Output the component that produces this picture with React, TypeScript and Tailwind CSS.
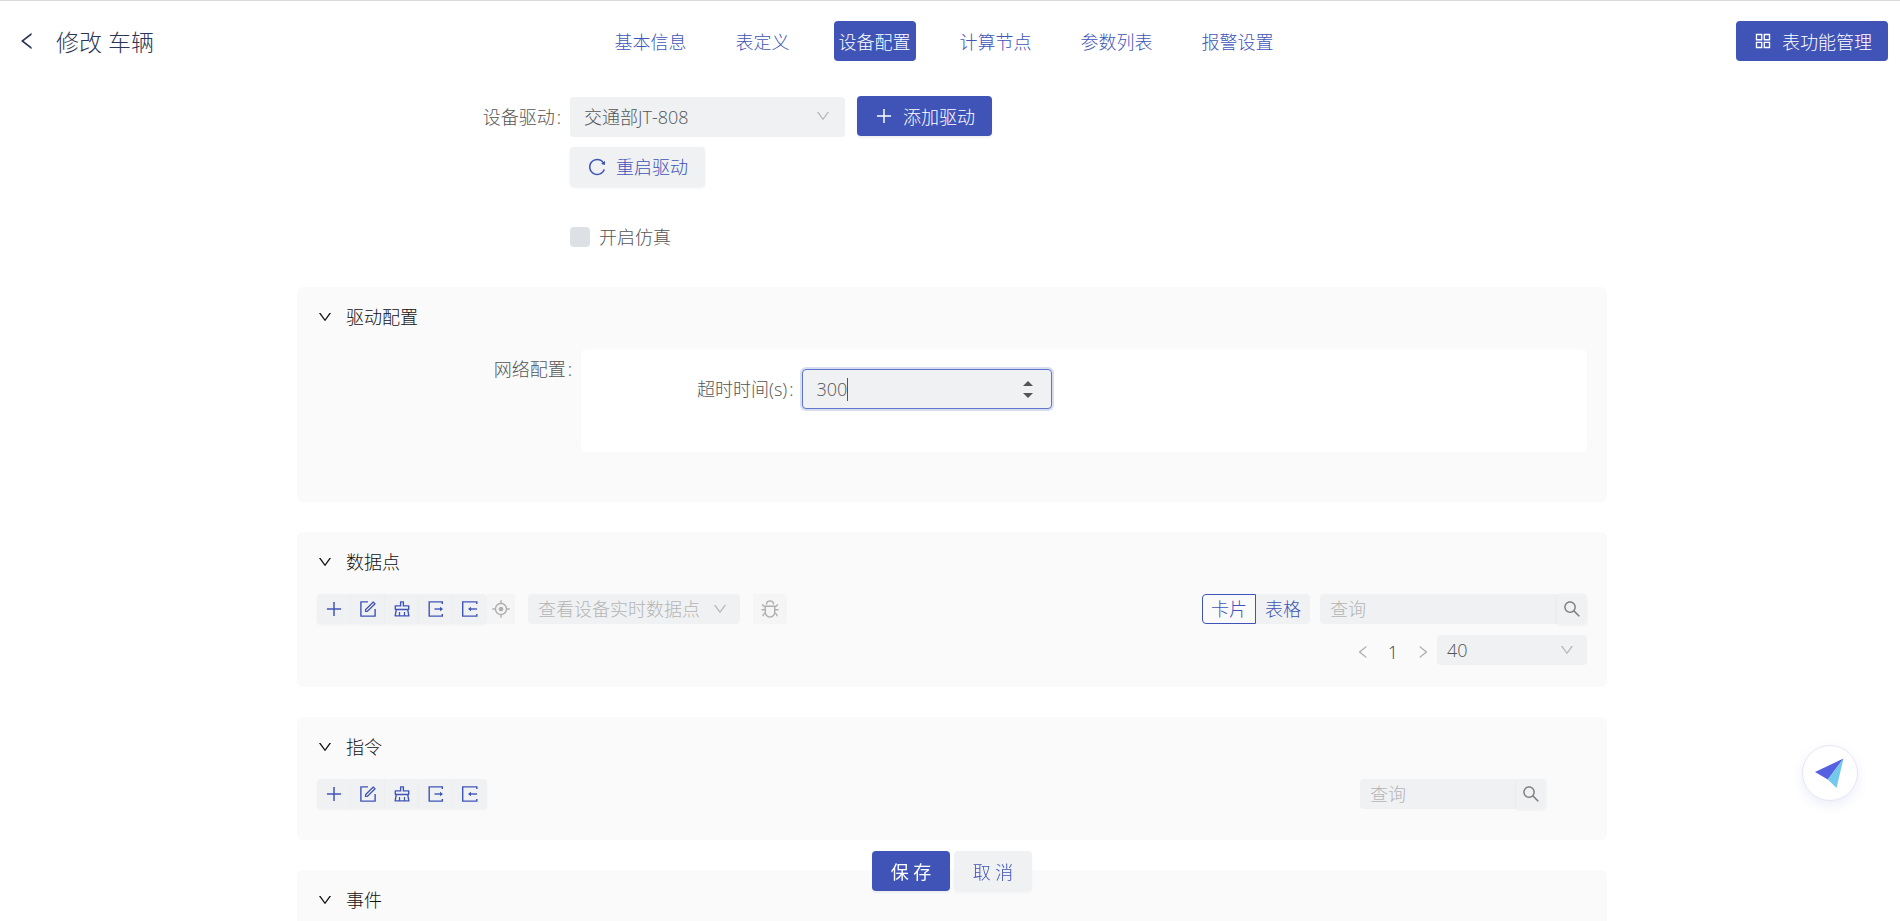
import React, { useState } from "react";
import type { ReactNode } from "react";
import {
  AiOutlineAim,
  AiOutlineAppstore,
  AiOutlineBug,
  AiOutlineClear,
  AiOutlineDown,
  AiOutlineForm,
  AiOutlineLeft,
  AiOutlinePlus,
  AiOutlineReload,
  AiOutlineRight,
  AiOutlineSearch,
} from "react-icons/ai";

const tabs = ["基本信息", "表定义", "设备配置", "计算节点", "参数列表", "报警设置"];

function ExportIcon() {
  return (
    <svg viewBox="0 0 20 20" className="size-5 fill-none stroke-current stroke-[1.4]">
      <path d="M16.300 5V2.900H3.200v14.200h13.100V15" />
      <path d="M8.500 10h6" />
      <path d="M14 7.800 17 10l-3 2.200z" className="fill-current stroke-none" />
    </svg>
  );
}

function ImportIcon() {
  return (
    <svg viewBox="0 0 20 20" className="size-5 fill-none stroke-current stroke-[1.4]">
      <path d="M16.800 5V2.900H2.700v14.200h14.100V15" />
      <path d="M10.500 10h6.500" />
      <path d="M11 7.800 8 10l3 2.200z" className="fill-current stroke-none" />
    </svg>
  );
}

function Header() {
  const [active, setActive] = useState("设备配置");
  return (
    <header className="grid grid-cols-[1fr_auto_1fr] items-center border-t border-[#d9d9d9] py-5 pr-3 pl-4">
      <div className="flex items-center gap-[18px] text-[#2c3554]">
        <button type="button" aria-label="返回">
          <AiOutlineLeft className="size-[22px]" />
        </button>
        <h1 className="pt-px text-[23px] leading-8">修改 车辆</h1>
      </div>
      <nav className="-ml-4 flex gap-[39px]">
        {tabs.map((tab) => (
          <button
            key={tab}
            type="button"
            onClick={() => setActive(tab)}
            className={
              tab === active
                ? "h-10 rounded bg-[#4054b8] px-[5px] pt-0.5 text-white"
                : "h-10 rounded px-[5px] pt-0.5 text-[#4054b8]"
            }
          >
            {tab}
          </button>
        ))}
      </nav>
      <button
        type="button"
        className="flex h-10 items-center gap-[9px] justify-self-end rounded bg-[#4054b8] pr-4 pl-[17px] text-white"
      >
        <AiOutlineAppstore className="size-5" />
        <span className="pt-0.5">表功能管理</span>
      </button>
    </header>
  );
}

function Panel({ title, className, children }: { title: string; className: string; children?: ReactNode }) {
  return (
    <section className={`${className} bg-[#fafafa] px-5 pt-4`}>
      <h2>
        <button type="button" className="flex h-7 items-center gap-[13px] text-[#111]">
          <AiOutlineDown className="size-4" />
          {title}
        </button>
      </h2>
      {children}
    </section>
  );
}

function Toolbar() {
  const items = [
    { label: "新增", icon: <AiOutlinePlus /> },
    { label: "编辑", icon: <AiOutlineForm /> },
    { label: "清空", icon: <AiOutlineClear /> },
    { label: "导出", icon: <ExportIcon /> },
    { label: "导入", icon: <ImportIcon /> },
  ];
  return (
    <div className="flex">
      {items.map((item) => (
        <button
          key={item.label}
          type="button"
          aria-label={item.label}
          className="flex h-[30px] w-[34px] items-center justify-center bg-[#eff1f3] text-xl text-[#4054b8] shadow-[0_1px_3px_rgba(0,0,0,0.04)] first:rounded-l last:rounded-r"
        >
          {item.icon}
        </button>
      ))}
    </div>
  );
}

function Search({ className }: { className: string }) {
  return (
    <div className={`${className} flex`}>
      <input
        type="text"
        aria-label="查询"
        placeholder="查询"
        className="h-[30px] min-w-0 flex-1 rounded-l bg-[#eff1f3] px-2.5 placeholder:text-[#b5b5b5] focus:outline-none"
      />
      <button
        type="button"
        aria-label="搜索"
        className="flex size-[30px] items-center justify-center rounded-r bg-[#eff1f3] text-xl text-[#808080] shadow-[0_1px_3px_rgba(0,0,0,0.06)]"
      >
        <AiOutlineSearch />
      </button>
    </div>
  );
}

export default function App() {
  const [view, setView] = useState("卡片");
  const [timeout, setTimeoutValue] = useState("300");
  const step = (n: number) => setTimeoutValue(String((Number(timeout) || 0) + n));

  return (
    <div className="flex h-screen flex-col overflow-hidden bg-white font-['Open_Sans','Noto_Sans_CJK_SC',sans-serif] text-lg leading-7 font-light text-[#555]">
      <Header />

      <main className="flex min-h-0 flex-1 flex-col pl-1">
        <div className="mx-auto flex w-full max-w-[1310px] flex-1 flex-col">
          <form className="grid shrink-0 grid-cols-[264px_1fr] gap-x-[9px] pt-[15px]">
            <label htmlFor="driver" className="flex h-10 items-center justify-end pt-0.5">
              设备驱动<span className="pl-0.5">:</span>
            </label>
            <div className="flex flex-col items-start gap-2.5">
              <div className="flex gap-3">
                <div className="relative w-[275px] pt-px">
                  <select
                    id="driver"
                    className="block h-10 w-full appearance-none rounded bg-[#eff1f3] px-3.5"
                  >
                    <option>交通部JT-808</option>
                  </select>
                  <AiOutlineDown className="pointer-events-none absolute top-3 right-3.5 size-4 text-[#b8b8b8]" />
                </div>
                <button
                  type="button"
                  className="flex h-10 items-center gap-[9px] rounded bg-[#4054b8] px-[17px] text-white shadow-[0_2px_2px_rgba(0,0,0,0.06)]"
                >
                  <AiOutlinePlus className="size-5" />
                  <span className="pt-0.5">添加驱动</span>
                </button>
              </div>
              <button
                type="button"
                className="flex h-10 items-center gap-[9px] rounded bg-[#eff1f3] px-[17px] text-[#4054b8] shadow-[0_1px_3px_rgba(0,0,0,0.06)]"
              >
                <AiOutlineReload className="size-5" />
                重启驱动
              </button>
            </div>
            <label className="col-start-2 mt-9 flex items-center gap-[9px] justify-self-start">
              <input
                type="checkbox"
                className="size-5 appearance-none rounded bg-[#dde1e6] checked:bg-[#4054b8]"
              />
              开启仿真
            </label>
          </form>

          <div className="mt-9 flex min-h-0 flex-1 flex-col gap-[30px]">
            <Panel title="驱动配置" className="shrink-0 rounded-md pb-[50px]">
              <div className="mt-[18px] grid grid-cols-[255px_1fr] gap-x-[9px]">
                <div className="flex h-10 items-center justify-end">
                  网络配置<span className="pl-0.5">:</span>
                </div>
                <div className="flex items-start gap-[9px] rounded-md bg-white pt-5 pb-[43px] pl-[116px]">
                  <label htmlFor="timeout" className="flex h-10 items-center">
                    超时时间(s)<span className="pl-0.5">:</span>
                  </label>
                  <div className="flex h-10 w-[250px] items-center rounded border border-[#6175cc] bg-[#eff1f3] pr-[18px] pl-[13px] shadow-[0_0_0_2px_rgba(64,84,184,0.2)]">
                    <input
                      id="timeout"
                      type="text"
                      inputMode="numeric"
                      value={timeout}
                      onChange={(e) => setTimeoutValue(e.target.value)}
                      className="[field-sizing:content] max-w-[180px] caret-transparent focus:outline-none"
                    />
                    <span className="h-[23px] w-px bg-[#555]" />
                    <div className="ml-auto flex flex-col gap-[7px] text-[#555]">
                      <button type="button" aria-label="增加" onClick={() => step(1)}>
                        <svg viewBox="0 0 10 5" className="h-[5px] w-2.5 fill-current">
                          <path d="M0 5 5 0l5 5z" />
                        </svg>
                      </button>
                      <button type="button" aria-label="减少" onClick={() => step(-1)}>
                        <svg viewBox="0 0 10 5" className="h-[5px] w-2.5 fill-current">
                          <path d="M0 0h10L5 5z" />
                        </svg>
                      </button>
                    </div>
                  </div>
                </div>
              </div>
            </Panel>

            <Panel title="数据点" className="shrink-0 rounded-md pb-[22px]">
              <div className="mt-[18px] flex items-center">
                <Toolbar />
                <button
                  type="button"
                  disabled
                  aria-label="定位"
                  className="flex h-[30px] w-7 items-center justify-center bg-[#f5f5f5] text-xl text-[#b0b0b0]"
                >
                  <AiOutlineAim />
                </button>
                <div className="relative ml-[13px] w-[212px]">
                  <select
                    disabled
                    aria-label="查看设备实时数据点"
                    className="block h-[30px] w-full appearance-none rounded bg-[#eff1f3] px-2.5 text-[#b5b5b5] opacity-100"
                  >
                    <option>查看设备实时数据点</option>
                  </select>
                  <AiOutlineDown className="pointer-events-none absolute top-[7px] right-3 size-4 text-[#b8b8b8]" />
                </div>
                <button
                  type="button"
                  disabled
                  aria-label="调试"
                  className="ml-[13px] flex h-[30px] w-[34px] items-center justify-center rounded-r bg-[#f5f5f5] text-xl text-[#b0b0b0]"
                >
                  <AiOutlineBug />
                </button>
                <div className="ml-auto flex">
                  {["卡片", "表格"].map((name) => (
                    <button
                      key={name}
                      type="button"
                      onClick={() => setView(name)}
                      className={
                        name === view
                          ? "flex h-[30px] w-[54px] items-center justify-center border border-[#4054b8] text-[#4054b8] first:rounded-l last:rounded-r"
                          : "flex h-[30px] w-[54px] items-center justify-center bg-[#eff1f3] text-[#4054b8] first:rounded-l last:rounded-r"
                      }
                    >
                      {name}
                    </button>
                  ))}
                </div>
                <Search className="ml-2.5 w-[267px]" />
              </div>
              <div className="mt-[11px] flex h-[30px] items-start justify-end">
                <div className="flex items-center pt-[3px]">
                  <button type="button" aria-label="上一页" className="text-[#b0b0b0]">
                    <AiOutlineLeft className="size-4" />
                  </button>
                  <button type="button" className="w-11 text-[#444]">
                    1
                  </button>
                  <button type="button" aria-label="下一页" className="text-[#b0b0b0]">
                    <AiOutlineRight className="size-4" />
                  </button>
                </div>
                <div className="relative ml-1.5 w-[150px]">
                  <select
                    aria-label="每页条数"
                    className="block h-[30px] w-full appearance-none rounded bg-[#eff1f3] px-2.5"
                  >
                    <option>40</option>
                  </select>
                  <AiOutlineDown className="pointer-events-none absolute top-[7px] right-3 size-4 text-[#b8b8b8]" />
                </div>
              </div>
            </Panel>

            <Panel title="指令" className="shrink-0 rounded-md pb-[31px]">
              <div className="mt-[18px] flex items-center justify-between pr-[41px]">
                <Toolbar />
                <Search className="w-[186px]" />
              </div>
            </Panel>

            <Panel title="事件" className="min-h-0 flex-1 overflow-hidden rounded-t-md" />
          </div>
        </div>
      </main>

      <div className="fixed inset-x-0 bottom-[30px] flex justify-center gap-1 pl-1">
        <button
          type="button"
          className="h-10 w-[78px] rounded bg-[#4054b8] pt-0.5 font-normal text-white shadow-[0_2px_2px_rgba(0,0,0,0.05)]"
        >
          保 存
        </button>
        <button
          type="button"
          className="h-10 w-[78px] rounded bg-[#eff1f3] pt-0.5 text-[#4054b8] shadow-[0_2px_2px_rgba(0,0,0,0.03)]"
        >
          取 消
        </button>
      </div>

      <button
        type="button"
        aria-label="助手"
        className="fixed right-[42px] bottom-[120px] flex size-14 items-center justify-center rounded-full border border-[#e4e6f5] bg-white shadow-[0_4px_12px_rgba(64,84,184,0.1)]"
      >
        <svg viewBox="0 0 30 30" className="size-[30px]">
          <path d="M0 14 28.500 0.500 12.800 21.500z" fill="#5561e0" />
          <path d="M28.500 0.500 21.500 30 12.800 21.500z" fill="#73c9ec" />
        </svg>
      </button>
    </div>
  );
}
